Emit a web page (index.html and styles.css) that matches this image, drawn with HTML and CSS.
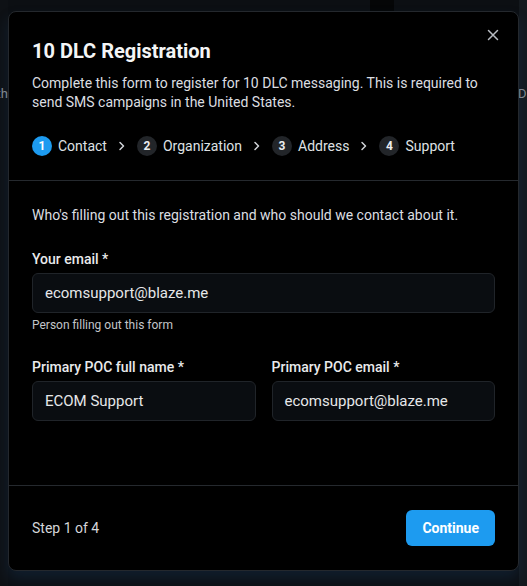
FILE: index.html
```html
<!DOCTYPE html>
<html>
<head>
<meta charset="utf-8">
<link rel="stylesheet" href="styles.css">
</head>
<body>
<div class="backdrop">
  <div class="bg-col bg-left"><span class="bg-text">th</span></div>
  <div class="bg-col bg-mid"><div class="bg-tab"></div></div>
  <div class="bg-col bg-right"><span class="bg-text">DL</span></div>
</div>
<div class="modal">
  <div class="header">
    <button class="close" aria-label="Close">
      <svg width="12" height="12" viewBox="0 0 12 12"><path d="M1.5 1.5L10.5 10.5M10.5 1.5L1.5 10.5" stroke="#b8bcc2" stroke-width="1.5" stroke-linecap="round"/></svg>
    </button>
    <h1 class="title">10 DLC Registration</h1>
    <p class="desc">Complete this form to register for 10 DLC messaging. This is required to send SMS campaigns in the United States.</p>
    <div class="stepper">
      <div class="step"><span class="num active">1</span><span class="step-label">Contact</span></div>
      <svg class="chev" width="10" height="10" viewBox="0 0 10 10"><path d="M3 1.5L6.5 5L3 8.5" stroke="#d0d3d7" stroke-width="1.5" fill="none" stroke-linecap="round" stroke-linejoin="round"/></svg>
      <div class="step"><span class="num">2</span><span class="step-label">Organization</span></div>
      <svg class="chev" width="10" height="10" viewBox="0 0 10 10"><path d="M3 1.5L6.5 5L3 8.5" stroke="#d0d3d7" stroke-width="1.5" fill="none" stroke-linecap="round" stroke-linejoin="round"/></svg>
      <div class="step"><span class="num">3</span><span class="step-label">Address</span></div>
      <svg class="chev" width="10" height="10" viewBox="0 0 10 10"><path d="M3 1.5L6.5 5L3 8.5" stroke="#d0d3d7" stroke-width="1.5" fill="none" stroke-linecap="round" stroke-linejoin="round"/></svg>
      <div class="step"><span class="num">4</span><span class="step-label">Support</span></div>
    </div>
  </div>
  <div class="body">
    <p class="intro">Who's filling out this registration and who should we contact about it.</p>
    <div class="field">
      <label class="label">Your email *</label>
      <div class="input">ecomsupport@blaze.me</div>
      <div class="help">Person filling out this form</div>
    </div>
    <div class="row">
      <div class="field">
        <label class="label">Primary POC full name *</label>
        <div class="input">ECOM Support</div>
      </div>
      <div class="field">
        <label class="label">Primary POC email *</label>
        <div class="input">ecomsupport@blaze.me</div>
      </div>
    </div>
  </div>
  <div class="footer">
    <span class="step-count">Step 1 of 4</span>
    <button class="continue">Continue</button>
  </div>
</div>
</body>
</html>
```

FILE: styles.css
```css
* { box-sizing: border-box; }
html, body { margin: 0; padding: 0; }
body {
  width: 527px;
  height: 586px;
  background: #0c0f13;
  font-family: Roboto, "Liberation Sans", sans-serif;
  color: #e8e9eb;
  position: relative;
  overflow: hidden;
}
.backdrop {
  display: flex;
  height: 586px;
}
.bg-col { position: relative; overflow: hidden; }
.bg-left { width: 8px; background: #0e1115; }
.bg-mid { flex: 1; }
.bg-right { width: 8px; background: #14191e; }
.bg-text {
  position: absolute;
  top: 86px;
  font-size: 13px;
  color: #8a8f96;
  white-space: nowrap;
}
.bg-left .bg-text { right: 0; }
.bg-right .bg-text { left: -1px; }
.bg-tab {
  position: absolute;
  left: 362px;
  top: 0;
  width: 24px;
  height: 11px;
  background: #050607;
}
.modal {
  position: absolute;
  left: 8px;
  top: 11px;
  width: 511px;
  height: 560px;
  background: #000;
  border: 1px solid #24282d;
  border-radius: 8px;
  box-shadow: 0 8px 14px rgba(28, 70, 110, 0.28);
  display: flex;
  flex-direction: column;
}
.header {
  position: relative;
  padding: 25px 23px 24px;
  border-bottom: 1px solid #25292e;
}
.close {
  position: absolute;
  top: 13px;
  right: 15px;
  width: 20px;
  height: 20px;
  padding: 0;
  border: 0;
  background: transparent;
  display: flex;
  align-items: center;
  justify-content: center;
}
.title {
  margin: 0;
  font-size: 20px;
  line-height: 28px;
  font-weight: 700;
  color: #f4f5f6;
}
.desc {
  margin: 9px 0 0;
  font-size: 14px;
  line-height: 19px;
  color: #dcdee1;
}
.stepper {
  margin-top: 24px;
  display: flex;
  align-items: center;
  gap: 10px;
  height: 20px;
}
.step {
  display: flex;
  align-items: center;
  gap: 6px;
}
.num {
  width: 20px;
  height: 20px;
  border-radius: 50%;
  background: #222529;
  color: #eceef0;
  font-size: 12px;
  font-weight: 700;
  display: flex;
  align-items: center;
  justify-content: center;
}
.num.active { background: #1d9bf0; color: #fff; }
.step-label {
  font-size: 14px;
  line-height: 20px;
  color: #dfe1e4;
}
.chev { flex: none; }
.body {
  flex: 1;
  padding: 24px 23px 0;
}
.intro {
  margin: 0 0 24px;
  font-size: 14px;
  line-height: 20px;
  color: #dcdee1;
}
.field { display: flex; flex-direction: column; }
.label {
  font-size: 14px;
  line-height: 20px;
  font-weight: 500;
  color: #e9eaec;
  margin-bottom: 4px;
}
.input {
  height: 40px;
  background: #0a0d11;
  border: 1px solid #202429;
  border-radius: 6px;
  padding: 0 12px;
  display: flex;
  align-items: center;
  font-size: 15px;
  color: #e6e7e9;
}
.help {
  margin-top: 4px;
  font-size: 12px;
  line-height: 16px;
  color: #c2c5c9;
}
.row {
  margin-top: 24px;
  display: grid;
  grid-template-columns: 1fr 1fr;
  gap: 16px;
}
.footer {
  border-top: 1px solid #25292e;
  padding: 24px 23px 24px;
  display: flex;
  align-items: center;
  justify-content: space-between;
}
.step-count {
  font-size: 14px;
  color: #d4d6d9;
}
.continue {
  height: 36px;
  padding: 0 16px;
  border: 0;
  border-radius: 6px;
  background: #1d9bf0;
  color: #fff;
  font-family: Roboto, "Liberation Sans", sans-serif;
  font-size: 14px;
  font-weight: 700;
}
```
